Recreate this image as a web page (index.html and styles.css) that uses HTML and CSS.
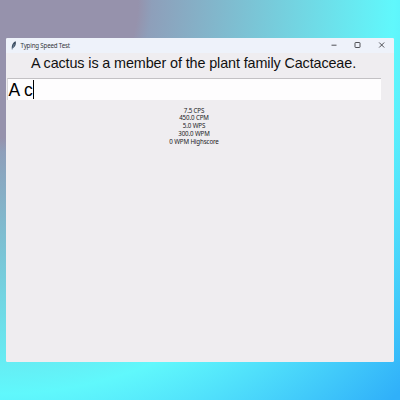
FILE: index.html
```
<!DOCTYPE html>
<html lang="en">
<head>
<meta charset="utf-8">
<title>Typing Speed Test</title>
<link rel="stylesheet" href="styles.css">
</head>
<body>
<main class="window">
  <header class="titlebar">
    <svg class="feather" viewBox="0 0 6 9"><path d="M1 8.8C.2 5 1.600 1.500 4.700.3 5.400 3 4.200 6.300 1.700 7.300Z" fill="#3c4c60"/><path d="M1.200 8.600 3.300 3" stroke="#8fa6bd" stroke-width=".6" fill="none"/></svg>
    <h1 class="title">Typing Speed Test</h1>
    <svg class="controls" viewBox="0 0 54 8" fill="none" stroke="#3e4044" stroke-width=".9"><path d="M.5 4.200h5M48.200 1.500l5 5M53.200 1.500l-5 5"/><rect x="24" y="1.500" width="5" height="5" rx=".6"/></svg>
  </header>
  <p class="sentence">A cactus is a member of the plant family Cactaceae.</p>
  <div class="entry"><span>A c</span><i class="caret"></i></div>
  <section class="stats">
    <div>7.5 CPS</div>
    <div>450.0 CPM</div>
    <div>5.0 WPS</div>
    <div>300.0 WPM</div>
    <div>0 WPM Highscore</div>
  </section>
</main>
</body>
</html>
```
FILE: styles.css
```
* { box-sizing: border-box; margin: 0; }
body {
  width: 400px;
  height: 400px;
  padding: 37.5px 6px 0;
  overflow: hidden;
  background: radial-gradient(circle at 0 0, #9692ac 138px, #8e9fba 152px, #60f8fc 394px, #30b0f9 560px);
}
.window {
  height: 324.500px;
  border-radius: 1.500px;
  background: #efedf0;
  overflow: hidden;
  color: #111;
  font-family: "Liberation Sans", sans-serif;
}
.titlebar {
  display: flex;
  align-items: center;
  height: 15.500px;
  padding: 0 9px 0 4.500px;
  background: #eef2fa;
}
.feather { width: 6px; height: 9px; margin-right: 4px; }
.title {
  font: 400 6.200px/15px "Noto Sans", sans-serif;
  letter-spacing: -.18px;
  color: #35373c;
  white-space: nowrap;
}
.controls { width: 54px; height: 8px; margin-left: auto; }
.sentence {
  height: 25px;
  padding-left: 25px;
  font-size: 14.400px;
  letter-spacing: -.12px;
  line-height: 21px;
  white-space: nowrap;
}
.entry {
  display: flex;
  align-items: center;
  width: 374px;
  height: 21.500px;
  margin-left: 1px;
  padding-left: .5px;
  border-top: 1px solid #c3c1c4;
  border-left: 1px solid #d8d6d9;
  background: #fefdfe;
  color: #000;
  font-size: 17.500px;
  line-height: 20px;
}
.entry span { padding-top: 1px; }
.caret { width: 1px; height: 19px; background: #000; }
.stats {
  width: 376px;
  padding-top: 7px;
  font: 6.200px/7.800px "Noto Sans", sans-serif;
  letter-spacing: -.12px;
  color: #202023;
  text-align: center;
}
```
